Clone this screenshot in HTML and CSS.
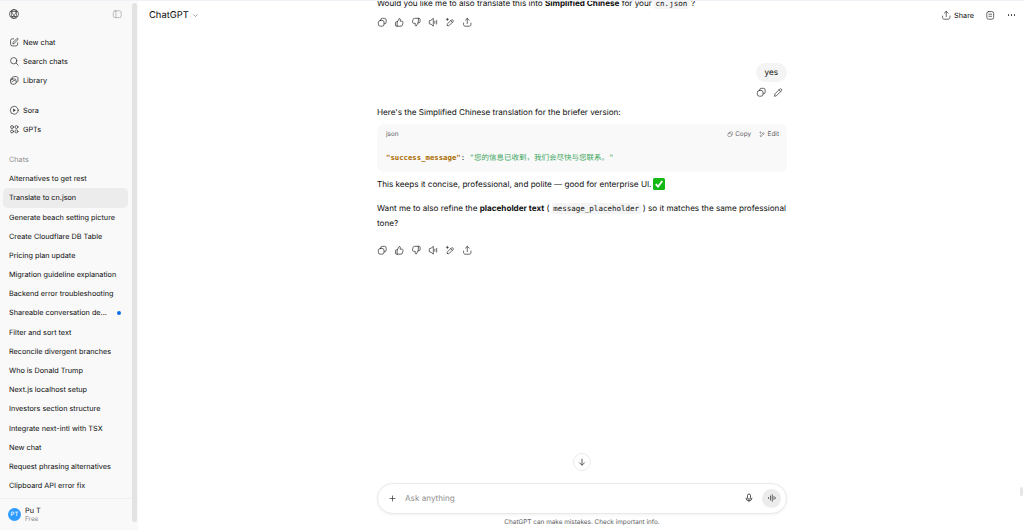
FILE: index.html
```html
<!DOCTYPE html>
<html lang="en">
<head>
    <meta charset="UTF-8">
    <meta name="viewport" content="width=device-width, initial-scale=1.0">
    <title>ChatGPT - Translate to cn.json</title>
    <link rel="stylesheet" href="styles.css">
</head>
<body>
    <svg class="defs" width="0" height="0" aria-hidden="true">
        <defs>
            <symbol id="i-copy" viewBox="0 0 20 20"><rect x="2.500" y="6.500" width="11" height="11" rx="4"/><path d="M7 6.500V6a3.500 3.500 0 0 1 3.500-3.500H14A3.500 3.500 0 0 1 17.500 6v3.500A3.500 3.500 0 0 1 14 13h-.5"/></symbol>
            <symbol id="i-up" viewBox="0 0 20 20"><path d="M6.500 9 10 2.800c1.500 0 2.300 1 2.100 2.400L11.700 8h3.400c1.400 0 2.300 1.200 2 2.500l-1 4.800c-.3 1.300-1.300 2.200-2.700 2.200H6.500z"/><path d="M6.500 9H4.500c-1 0-1.800.8-1.800 1.800v4.900c0 1 .8 1.800 1.800 1.800h2"/></symbol>
            <symbol id="i-down" viewBox="0 0 20 20"><path d="M13.500 11 10 17.200c-1.500 0-2.300-1-2.100-2.400L8.300 12H4.900c-1.400 0-2.300-1.200-2-2.500l1-4.800c.3-1.300 1.300-2.200 2.700-2.200h6.900z"/><path d="M13.500 11h2c1 0 1.800-.8 1.800-1.800V4.300c0-1-.8-1.800-1.800-1.800h-2"/></symbol>
            <symbol id="i-speak" viewBox="0 0 20 20"><path d="M9.500 3 5.500 6.500H3.500c-.6 0-1 .4-1 1v5c0 .6.400 1 1 1h2l4 3.500z"/><path d="M13 8v4M16.500 6.500v7"/></symbol>
            <symbol id="i-retry" viewBox="0 0 20 20"><path d="M4.500 16c-.7-1.200-.4-2.300.5-3.200l7.200-7.200a2.300 2.300 0 0 1 3.200 3.200L8.200 16c-1 .9-2.400 1-3.700 0z"/><path d="M10.800 7l3.200 3.200M4.500 2.500v4M2.500 4.500h4"/></symbol>
            <symbol id="i-share" viewBox="0 0 20 20"><path d="M10 12.500V2.800M6.500 6 10 2.500 13.500 6M3 11.500v3c0 1.600 1.300 3 3 3h8c1.700 0 3-1.400 3-3v-3"/></symbol>
            <symbol id="i-edit" viewBox="0 0 20 20"><path d="M3 17l.8-4L13 3.800a2.300 2.300 0 0 1 3.200 3.200L7 16.200z"/><path d="M11.500 5.500l3 3"/></symbol>
        </defs>
    </svg>

    <aside class="sidebar">
        <div class="side-top">
            <svg class="logo" viewBox="0 0 20 20"><circle cx="10" cy="10" r="7.500"/><path d="M10 2.500c3 1.500 4.500 4 4.500 7.500s-1.500 6-4.500 7.500c-3-1.500-4.500-4-4.500-7.500s1.500-6 4.500-7.500zM3.500 6.300c3.400-.7 9.500-.7 13 0M3.500 13.700c3.400.7 9.500.7 13 0M6.200 3.500c-.8 3.300 3.500 10 7.600 13M13.800 3.500c.8 3.300-3.500 10-7.600 13"/></svg>
            <svg class="icon side-toggle" viewBox="0 0 20 20"><rect x="2.500" y="3.500" width="15" height="13" rx="3.500"/><path d="M7.500 3.500v13"/></svg>
        </div>

        <nav class="side-nav">
            <a class="side-item"><svg class="icon" viewBox="0 0 20 20"><path d="M9 3.500H6.500a3.500 3.500 0 0 0-3.500 3.500v6.500A3.500 3.500 0 0 0 6.500 17H13a3.500 3.500 0 0 0 3.500-3.500V11"/><path d="M7.500 12.500l.5-2.500 7-7a1.400 1.400 0 0 1 2 2l-7 7z"/></svg>New chat</a>
            <a class="side-item"><svg class="icon" viewBox="0 0 20 20"><circle cx="9" cy="9" r="6"/><path d="M13.500 13.500 17.500 17.500"/></svg>Search chats</a>
            <a class="side-item"><svg class="icon" viewBox="0 0 20 20"><path d="M3 10.500C3 6 6.500 3 11 3h3c1.700 0 3 1.300 3 3v5c0 1.700-1.300 3-3 3"/><rect x="3" y="7.500" width="10.500" height="10" rx="3.500"/><path d="M5.500 13.500c1-2 3-3 5.500-3"/></svg>Library</a>
        </nav>

        <nav class="side-nav">
            <a class="side-item"><svg class="icon" viewBox="0 0 20 20"><circle cx="10" cy="10" r="7.500"/><path class="fill" d="M8 6.800v6.400l5-3.200z"/></svg>Sora</a>
            <a class="side-item"><svg class="icon" viewBox="0 0 20 20"><circle cx="5.800" cy="5.800" r="2.800"/><circle cx="14.200" cy="5.800" r="2.800"/><circle cx="5.800" cy="14.200" r="2.800"/><circle cx="14.200" cy="14.200" r="2.800"/></svg>GPTs</a>
        </nav>

        <h2 class="side-label">Chats</h2>
        <ul class="chat-list">
            <li>Alternatives to get rest</li>
            <li class="active">Translate to cn.json</li>
            <li>Generate beach setting picture</li>
            <li>Create Cloudflare DB Table</li>
            <li>Pricing plan update</li>
            <li>Migration guideline explanation</li>
            <li>Backend error troubleshooting</li>
            <li class="unread">Shareable conversation de...</li>
            <li>Filter and sort text</li>
            <li>Reconcile divergent branches</li>
            <li>Who is Donald Trump</li>
            <li>Next.js localhost setup</li>
            <li>Investors section structure</li>
            <li>Integrate next-intl with TSX</li>
            <li>New chat</li>
            <li>Request phrasing alternatives</li>
            <li>Clipboard API error fix</li>
        </ul>

        <div class="side-user">
            <div class="avatar">PT</div>
            <div class="user-details">
                <div class="user-name">Pu T</div>
                <div class="user-plan">Free</div>
            </div>
        </div>
        <div class="side-scroll"></div>
    </aside>

    <main class="main">
        <header class="topbar">
            <div class="model">ChatGPT <svg viewBox="0 0 10 10"><path d="M2 3.500 5 6.500 8 3.500"/></svg></div>
            <div class="top-actions">
                <span class="share"><svg class="icon"><use href="#i-share"/></svg>Share</span>
                <svg class="icon" viewBox="0 0 20 20"><rect x="3.500" y="3" width="13" height="14.500" rx="3.500"/><path d="M7.500 8h5M7.500 12h5"/></svg>
                <span class="more"><i></i><i></i><i></i></span>
            </div>
        </header>

        <div class="thread">
            <p class="msg first">Would you like me to also translate this into <b>Simplified Chinese</b> for your <code>cn.json</code> ?</p>
            <div class="actions">
                <svg class="icon"><use href="#i-copy"/></svg>
                <svg class="icon"><use href="#i-up"/></svg>
                <svg class="icon"><use href="#i-down"/></svg>
                <svg class="icon"><use href="#i-speak"/></svg>
                <svg class="icon"><use href="#i-retry"/></svg>
                <svg class="icon"><use href="#i-share"/></svg>
            </div>

            <div class="user-msg"><span class="bubble">yes</span></div>
            <div class="user-actions">
                <svg class="icon"><use href="#i-copy"/></svg>
                <svg class="icon"><use href="#i-edit"/></svg>
            </div>

            <p class="msg intro">Here's the Simplified Chinese translation for the briefer version:</p>
            <div class="code-block">
                <div class="code-head">
                    <span>json</span>
                    <span class="code-tools">
                        <span><svg class="tiny"><use href="#i-copy"/></svg>Copy</span>
                        <span><svg class="tiny"><use href="#i-retry"/></svg>Edit</span>
                    </span>
                </div>
                <pre class="code-body"><span class="key">"success_message"</span>: <span class="str">"您的信息已收到，我们会尽快与您联系。"</span></pre>
            </div>
            <p class="msg keeps">This keeps it concise, professional, and polite — good for enterprise UI.<svg class="check" viewBox="0 0 12 12"><rect width="12" height="12" rx="1.500"/><path d="M2.800 6.200 5 8.700 9.300 3"/></svg></p>
            <p class="msg want">Want me to also refine the <b>placeholder text</b> ( <code>message_placeholder</code> ) so it matches the same professional tone?</p>
            <div class="actions">
                <svg class="icon"><use href="#i-copy"/></svg>
                <svg class="icon"><use href="#i-up"/></svg>
                <svg class="icon"><use href="#i-down"/></svg>
                <svg class="icon"><use href="#i-speak"/></svg>
                <svg class="icon"><use href="#i-retry"/></svg>
                <svg class="icon"><use href="#i-share"/></svg>
            </div>
        </div>

        <button class="to-bottom"><svg viewBox="0 0 20 20"><path d="M10 3.500v13M4.500 11 10 16.500 15.500 11"/></svg></button>

        <div class="composer">
            <svg class="plus" viewBox="0 0 20 20"><path d="M10 3.500v13M3.500 10h13"/></svg>
            <span class="placeholder">Ask anything</span>
            <svg class="mic" viewBox="0 0 20 20"><rect x="7" y="2" width="6" height="10.500" rx="3"/><path d="M4 9.500a6 6 0 0 0 12 0M10 15.500V18"/></svg>
            <span class="voice"><svg viewBox="0 0 20 20"><path d="M3 9v2M7 6v8M10.500 3.500v13M14 7v6M17 9.500v1"/></svg></span>
        </div>
        <p class="disclaimer">ChatGPT can make mistakes. Check important info.</p>
        <div class="page-scroll"></div>
    </main>
</body>
</html>
```

FILE: styles.css
```css
:root {
    --text-primary: #0d0d0d;
    --text-secondary: #5d5d5d;
    --text-muted: #8f8f8f;
    --side-bg: #f9f9f9;
    --hover-bg: #ececec;
    --border-color: #e8e8e8;
}

* {
    margin: 0;
    padding: 0;
    box-sizing: border-box;
}

body {
    display: flex;
    height: 100vh;
    overflow: hidden;
    border-top: 1px solid #f1f1f8;
    background-color: #fff;
    color: var(--text-primary);
    font-family: Inter, "Noto Sans CJK SC", sans-serif;
    font-size: 8.130px;
    text-rendering: geometricPrecision;
}

.defs {
    position: absolute;
}

.icon {
    width: 10.500px;
    height: 10.500px;
    flex: none;
    fill: none;
    stroke: #333;
    stroke-width: 1.400;
    stroke-linecap: round;
    stroke-linejoin: round;
    overflow: visible;
}

.icon .fill {
    fill: #333;
    stroke: none;
}

/* Sidebar */
.sidebar {
    position: relative;
    display: flex;
    flex-direction: column;
    width: 138px;
    flex: none;
    background-color: var(--side-bg);
    font-size: 7.270px;
}

.side-top {
    display: flex;
    align-items: center;
    justify-content: space-between;
    height: 26px;
    padding: 0 16px 0 8px;
    margin-bottom: 5.500px;
}

.logo {
    width: 12px;
    height: 12px;
    fill: none;
    stroke: #333;
    stroke-width: 1.100;
}

.side-toggle {
    stroke: #999;
    stroke-width: 1.200;
}

.side-nav {
    display: flex;
    flex-direction: column;
    margin-bottom: 10.500px;
}

.side-nav + .side-label {
    margin-top: 0.500px;
}

.side-item {
    display: flex;
    align-items: center;
    gap: 3.500px;
    height: 19.200px;
    padding-left: 9px;
}

.side-label {
    height: 19.200px;
    line-height: 19.200px;
    padding-left: 9px;
    font-size: 7.270px;
    font-weight: 400;
    color: var(--text-muted);
}

.chat-list {
    list-style: none;
    flex: 1;
    padding-right: 10px;
    padding-left: 3px;
}

.chat-list li {
    position: relative;
    height: 19.200px;
    line-height: 19.200px;
    padding-left: 6px;
    white-space: nowrap;
    border-radius: 5px;
}

.chat-list .active {
    background-color: var(--hover-bg);
}

.chat-list .unread::after {
    content: "";
    position: absolute;
    top: 7.500px;
    right: 7px;
    width: 4px;
    height: 4px;
    border-radius: 50%;
    background-color: #0a6fe8;
}

.side-user {
    display: flex;
    align-items: center;
    gap: 4px;
    height: 32px;
    padding-left: 8px;
    border-top: 1px solid #efefef;
}

.avatar {
    display: flex;
    align-items: center;
    justify-content: center;
    width: 13px;
    height: 13px;
    border-radius: 50%;
    background-color: #2f9bff;
    color: #fff;
    font-size: 6px;
    font-weight: 500;
}

.user-name {
    line-height: 9px;
}

.user-plan {
    font-size: 6.400px;
    line-height: 9px;
    color: var(--text-muted);
}

.side-scroll {
    position: absolute;
    top: 2px;
    right: 1px;
    width: 5px;
    height: 519px;
    border-radius: 3px;
    background-color: #e3e3e3;
}

/* Main */
.main {
    position: relative;
    display: flex;
    flex-direction: column;
    flex: 1;
    min-width: 0;
    padding-left: 2px;
}

.topbar {
    position: absolute;
    top: 0;
    left: 0;
    right: 0;
    display: flex;
    align-items: center;
    justify-content: space-between;
    height: 28px;
    padding: 0 6px 0 11px;
}

.model {
    display: flex;
    align-items: center;
    gap: 3px;
    font-size: 9.400px;
}

.model svg {
    width: 7px;
    height: 7px;
    fill: none;
    stroke: #777;
    stroke-width: 1;
}

.top-actions {
    display: flex;
    align-items: center;
    gap: 11px;
}

.share {
    display: flex;
    align-items: center;
    gap: 3px;
    font-size: 7.270px;
}

.more {
    display: flex;
    gap: 1.500px;
    margin-left: -2px;
    padding: 0 3px;
}

.more i {
    width: 1.500px;
    height: 1.500px;
    border-radius: 50%;
    background-color: #333;
}

.thread {
    flex: 1;
    width: 410px;
    margin: 0 auto;
    overflow: hidden;
}

.msg {
    line-height: 15px;
}

.first {
    margin-top: -5px;
}

.msg code {
    padding: 1px 1.500px;
    border-radius: 2px;
    background-color: #f4f4f4;
    font-family: "DejaVu Sans Mono", monospace;
    font-size: 7.500px;
}

.actions {
    display: flex;
    gap: 6.600px;
    margin-top: 6px;
}

.user-msg {
    display: flex;
    justify-content: flex-end;
    margin-top: 35px;
}

.bubble {
    padding: 3px 9px;
    border-radius: 10px;
    background-color: #f4f4f4;
    line-height: 13px;
}

.user-actions {
    display: flex;
    justify-content: flex-end;
    gap: 6px;
    margin-top: 5px;
    padding-right: 4px;
}

.intro {
    margin-top: 8px;
}

.code-block {
    margin-top: 4px;
    height: 48px;
    border-radius: 7px;
    background-color: #f9f9f9;
}

.code-head {
    display: flex;
    align-items: center;
    justify-content: space-between;
    height: 20px;
    padding: 0 8px 0 9px;
    font-size: 6.400px;
    color: var(--text-secondary);
}

.code-tools {
    display: flex;
    gap: 8px;
}

.code-tools span {
    display: flex;
    align-items: center;
    gap: 2px;
}

.tiny {
    width: 6.500px;
    height: 6.500px;
    fill: none;
    stroke: var(--text-secondary);
    stroke-width: 1.500;
    stroke-linecap: round;
    stroke-linejoin: round;
}

.code-body {
    padding: 8px 9px 0;
    font-family: "DejaVu Sans Mono", "Noto Sans CJK SC", monospace;
    font-size: 7.300px;
    line-height: 12px;
}

.key {
    color: #aa6c00;
    font-weight: 700;
}

.str {
    color: #3ba55c;
    font-size: 7.500px;
}

.keeps {
    margin-top: 5px;
}

.check {
    width: 12px;
    height: 12px;
    margin-left: 1.500px;
    vertical-align: -2.500px;
}

.check rect {
    fill: #16b816;
}

.check path {
    fill: none;
    stroke: #fff;
    stroke-width: 1.800;
}

.want {
    margin-top: 8.500px;
}

.want + .actions {
    margin-top: 14px;
}

.to-bottom {
    position: absolute;
    left: 435px;
    top: 452px;
    display: flex;
    align-items: center;
    justify-content: center;
    width: 18px;
    height: 18px;
    border: 1px solid #ececec;
    border-radius: 50%;
    background-color: #fff;
}

.to-bottom svg {
    width: 10px;
    height: 10px;
    fill: none;
    stroke: #333;
    stroke-width: 1.600;
}

.composer {
    display: flex;
    align-items: center;
    width: 410px;
    height: 30.500px;
    margin: 0 auto;
    padding: 0 5px 0 10px;
    border: 1px solid #e9e9e9;
    border-radius: 15.500px;
    background-color: #fff;
    box-shadow: 0 1px 3px rgba(0, 0, 0, 0.06);
}

.plus {
    width: 9px;
    height: 9px;
    fill: none;
    stroke: #333;
    stroke-width: 1.600;
}

.placeholder {
    flex: 1;
    margin-left: 8px;
    color: var(--text-muted);
}

.mic {
    width: 10px;
    height: 10px;
    margin-right: 8px;
    fill: none;
    stroke: #333;
    stroke-width: 1.700;
}

.voice {
    display: flex;
    align-items: center;
    justify-content: center;
    width: 19px;
    height: 19px;
    border-radius: 50%;
    background-color: #ececec;
}

.voice svg {
    width: 10px;
    height: 10px;
    fill: none;
    stroke: #333;
    stroke-width: 1.500;
    stroke-linecap: round;
}

.disclaimer {
    height: 16.500px;
    line-height: 16px;
    text-align: center;
    font-size: 6.400px;
    color: var(--text-secondary);
}

.page-scroll {
    position: absolute;
    right: 1px;
    top: 486px;
    width: 3px;
    height: 9px;
    border-radius: 2px;
    background-color: #e6e6e6;
}
```
